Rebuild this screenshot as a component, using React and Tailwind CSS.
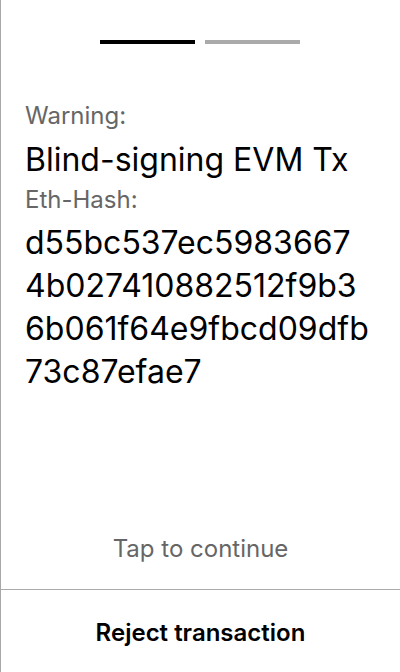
export default function App() {
  return (
    <div className="w-[400px] h-[672px] bg-white border-l border-[#a8a8a8] flex flex-col" style={{ fontFamily: "Inter, 'Noto Sans', sans-serif" }}>
      <div className="pt-10 pl-[99px] flex gap-[10px]">
        <div className="w-[95px] h-[4px] bg-black" />
        <div className="w-[95px] h-[4px] bg-[#aaaaaa]" />
      </div>
      <div className="pl-6 pt-[60px] flex flex-col">
        <div className="text-[24px] leading-[24px] text-[#666666]">Warning:</div>
        <div className="text-[32px] leading-[40px] text-black mt-[12px]">Blind-signing EVM Tx</div>
        <div className="text-[24px] leading-[28px] text-[#666666] mt-[6px]">Eth-Hash:</div>
        <div className="text-[32px] leading-[43px] text-black mt-[7px]">
          <div>d55bc537ec5983667</div>
          <div>4b027410882512f9b3</div>
          <div>6b061f64e9fbcd09dfb</div>
          <div>73c87efae7</div>
        </div>
      </div>
      <div className="flex-1" />
      <div className="text-center text-[24px] leading-[32px] text-[#666666] pb-[24px]">Tap to continue</div>
      <div className="border-t border-[#aaaaaa] h-[83px] flex items-center justify-center pt-[3px]">
        <span className="text-[24px] font-semibold text-black">Reject transaction</span>
      </div>
    </div>
  );
}
